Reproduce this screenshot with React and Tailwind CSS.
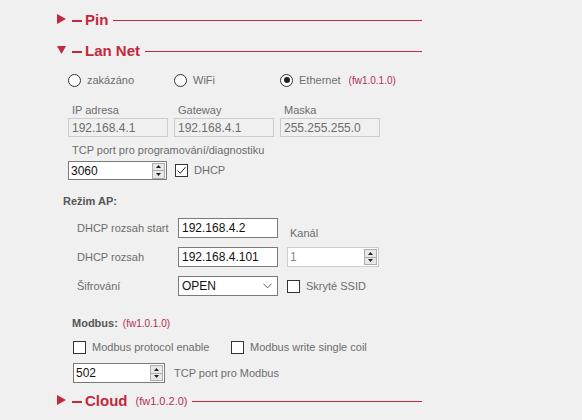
import React from 'react';

const font = { fontFamily: '"Liberation Sans", Arial, sans-serif' };

function Arrow({ open }) {
    return open ? (
        <svg width="9" height="8" viewBox="0 0 9 8" className="shrink-0">
            <path d="M0 0 L9 0 L4.5 8 Z" fill="#c4283c" />
        </svg>
    ) : (
        <svg width="9" height="10" viewBox="0 0 9 10" className="shrink-0">
            <path d="M0 0 L9 5 L0 10 Z" fill="#c4283c" />
        </svg>
    );
}

function Header({ title, open, fw }) {
    return (
        <div className="flex items-center h-[20px] w-[365px]">
            <Arrow open={open} />
            <div className="ml-[6px] w-[10px] h-[2px] bg-[#c4283c] mt-[3px]" />
            <span className="ml-[3px] text-[15px] font-bold text-[#c4283c] leading-none">{title}</span>
            {fw && <span className="ml-[8px] text-[11px] text-[#b03050] mt-[2px]">{fw}</span>}
            <div className="ml-[5px] flex-1 h-[1.5px] bg-[#c4283c] mt-[3px]" />
        </div>
    );
}

function Radio({ checked, label, width, extra }) {
    return (
        <div className="flex items-center h-[16px]" style={{ width }}>
            <div className="w-[13px] h-[13px] rounded-full border border-[#333] bg-white flex items-center justify-center shrink-0">
                {checked && <div className="w-[6px] h-[6px] rounded-full bg-[#222]" />}
            </div>
            <span className="ml-[6px] text-[11px] text-[#6d6d6d]">{label}</span>
            {extra && <span className="ml-[8px] text-[10px] text-[#b03050]">{extra}</span>}
        </div>
    );
}

function Check({ checked, label, dark }) {
    return (
        <div className="flex items-center h-[14px]">
            <div className="w-[13px] h-[13px] border border-[#333] bg-white shrink-0 flex items-center justify-center">
                {checked && (
                    <svg width="11" height="11" viewBox="0 0 11 11">
                        <path d="M1.5 5.5 L4.2 8.3 L9.5 2.2" stroke="#222" strokeWidth="1" fill="none" />
                    </svg>
                )}
            </div>
            <span className={'ml-[6px] text-[11px] ' + (dark ? 'text-[#222]' : 'text-[#6d6d6d]')}>{label}</span>
        </div>
    );
}

function Spin({ value, width, height, disabled }) {
    return (
        <div
            className={'flex items-center border bg-white ' + (disabled ? 'border-[#cccccc]' : 'border-[#7a7a7a]')}
            style={{ width, height }}
        >
            <span className={'flex-1 pl-[2px] text-[12px] ' + (disabled ? 'text-[#8a8a8a]' : 'text-[#111]')}>{value}</span>
            <div className="w-[13px] h-[16px] mr-[1px] flex flex-col border border-[#adadad] bg-[#e8e8e8]">
                <div className="flex-1 flex items-center justify-center border-b border-[#adadad]">
                    <svg width="5" height="3" viewBox="0 0 5 3"><path d="M0 3 L2.5 0 L5 3 Z" fill="#222" /></svg>
                </div>
                <div className="flex-1 flex items-center justify-center">
                    <svg width="5" height="3" viewBox="0 0 5 3"><path d="M0 0 L2.5 3 L5 0 Z" fill="#222" /></svg>
                </div>
            </div>
        </div>
    );
}

function RoField({ label, value }) {
    return (
        <div className="w-[100px] flex flex-col">
            <span className="h-[14px] pl-[4px] text-[11px] text-[#6d6d6d] leading-[14px]">{label}</span>
            <div className="mt-[1px] h-[19px] border border-[#cccccc] bg-[#f0f0f0] flex items-center pl-[3px] text-[12px] text-[#6d6d6d]">
                {value}
            </div>
        </div>
    );
}

function TextBox({ value }) {
    return (
        <div className="w-[100px] h-[20px] border border-[#7a7a7a] bg-white flex items-center pl-[3px] text-[12px] text-[#111]">
            {value}
        </div>
    );
}

export default function App() {
    return (
        <div className="w-[582px] h-[420px] bg-[#f0f0f0] overflow-hidden pl-[57px] pt-[9px]" style={font}>
            <Header title="Pin" />
            <div className="mt-[11px]">
                <Header title="Lan Net" open />
            </div>

            <div className="pl-[11px]">
                <div className="mt-[12px] flex">
                    <Radio label="zakázáno" width={106} />
                    <Radio label="WiFi" width={106} />
                    <Radio label="Ethernet" checked extra="(fw1.0.1.0)" />
                </div>

                <div className="mt-[15px] flex gap-[6px]">
                    <RoField label="IP adresa" value="192.168.4.1" />
                    <RoField label="Gateway" value="192.168.4.1" />
                    <RoField label="Maska" value="255.255.255.0" />
                </div>

                <div className="mt-[6px] h-[14px] pl-[4px] text-[11px] text-[#6d6d6d] leading-[14px]">
                    TCP port pro programování/diagnostiku
                </div>
                <div className="mt-[4px] flex items-center">
                    <Spin value="3060" width={99} height={19} />
                    <div className="ml-[8px]">
                        <Check checked label="DHCP" />
                    </div>
                </div>
            </div>

            <div className="mt-[14px] pl-[6px] h-[14px] text-[11px] font-bold text-[#555] leading-[14px]">
                Režim AP:
            </div>

            <div className="pl-[20px] mt-[10px] flex">
                <div className="w-[101px] flex flex-col text-[11px] text-[#6d6d6d]">
                    <div className="h-[20px] flex items-center">DHCP rozsah start</div>
                    <div className="h-[20px] mt-[9px] flex items-center">DHCP rozsah</div>
                    <div className="h-[20px] mt-[9px] flex items-center">Šifrování</div>
                </div>
                <div className="flex flex-col">
                    <TextBox value="192.168.4.2" />
                    <div className="mt-[9px]">
                        <TextBox value="192.168.4.101" />
                    </div>
                    <div className="mt-[9px] w-[100px] h-[20px] border border-[#7a7a7a] bg-white flex items-center justify-between pl-[3px] pr-[5px] text-[12px] text-[#111]">
                        <span>OPEN</span>
                        <svg width="9" height="6" viewBox="0 0 9 6">
                            <path d="M0.5 0.8 L4.5 4.8 L8.5 0.8" stroke="#555" strokeWidth="1" fill="none" />
                        </svg>
                    </div>
                </div>
                <div className="ml-[9px] flex flex-col">
                    <div className="h-[20px] pl-[3px] pt-[8px] text-[11px] text-[#6d6d6d] leading-[14px]">Kanál</div>
                    <div className="mt-[9px]">
                        <Spin value="1" width={92} height={20} disabled />
                    </div>
                    <div className="mt-[9px] h-[20px] flex items-center">
                        <Check label="Skryté SSID" />
                    </div>
                </div>
            </div>

            <div className="mt-[20px] pl-[15px] h-[14px] flex items-center">
                <span className="text-[11px] font-bold text-[#555]">Modbus:</span>
                <span className="ml-[5px] text-[10px] text-[#b03050]">(fw1.0.1.0)</span>
            </div>

            <div className="mt-[10px] pl-[16px] flex">
                <div className="w-[158px]">
                    <Check label="Modbus protocol enable" />
                </div>
                <Check label="Modbus write single coil" />
            </div>

            <div className="mt-[9px] pl-[16px] flex items-center">
                <Spin value="502" width={92} height={20} />
                <span className="ml-[9px] text-[11px] text-[#6d6d6d]">TCP port pro Modbus</span>
            </div>

            <div className="mt-[7px]">
                <Header title="Cloud" fw="(fw1.0.2.0)" />
            </div>
        </div>
    );
}
